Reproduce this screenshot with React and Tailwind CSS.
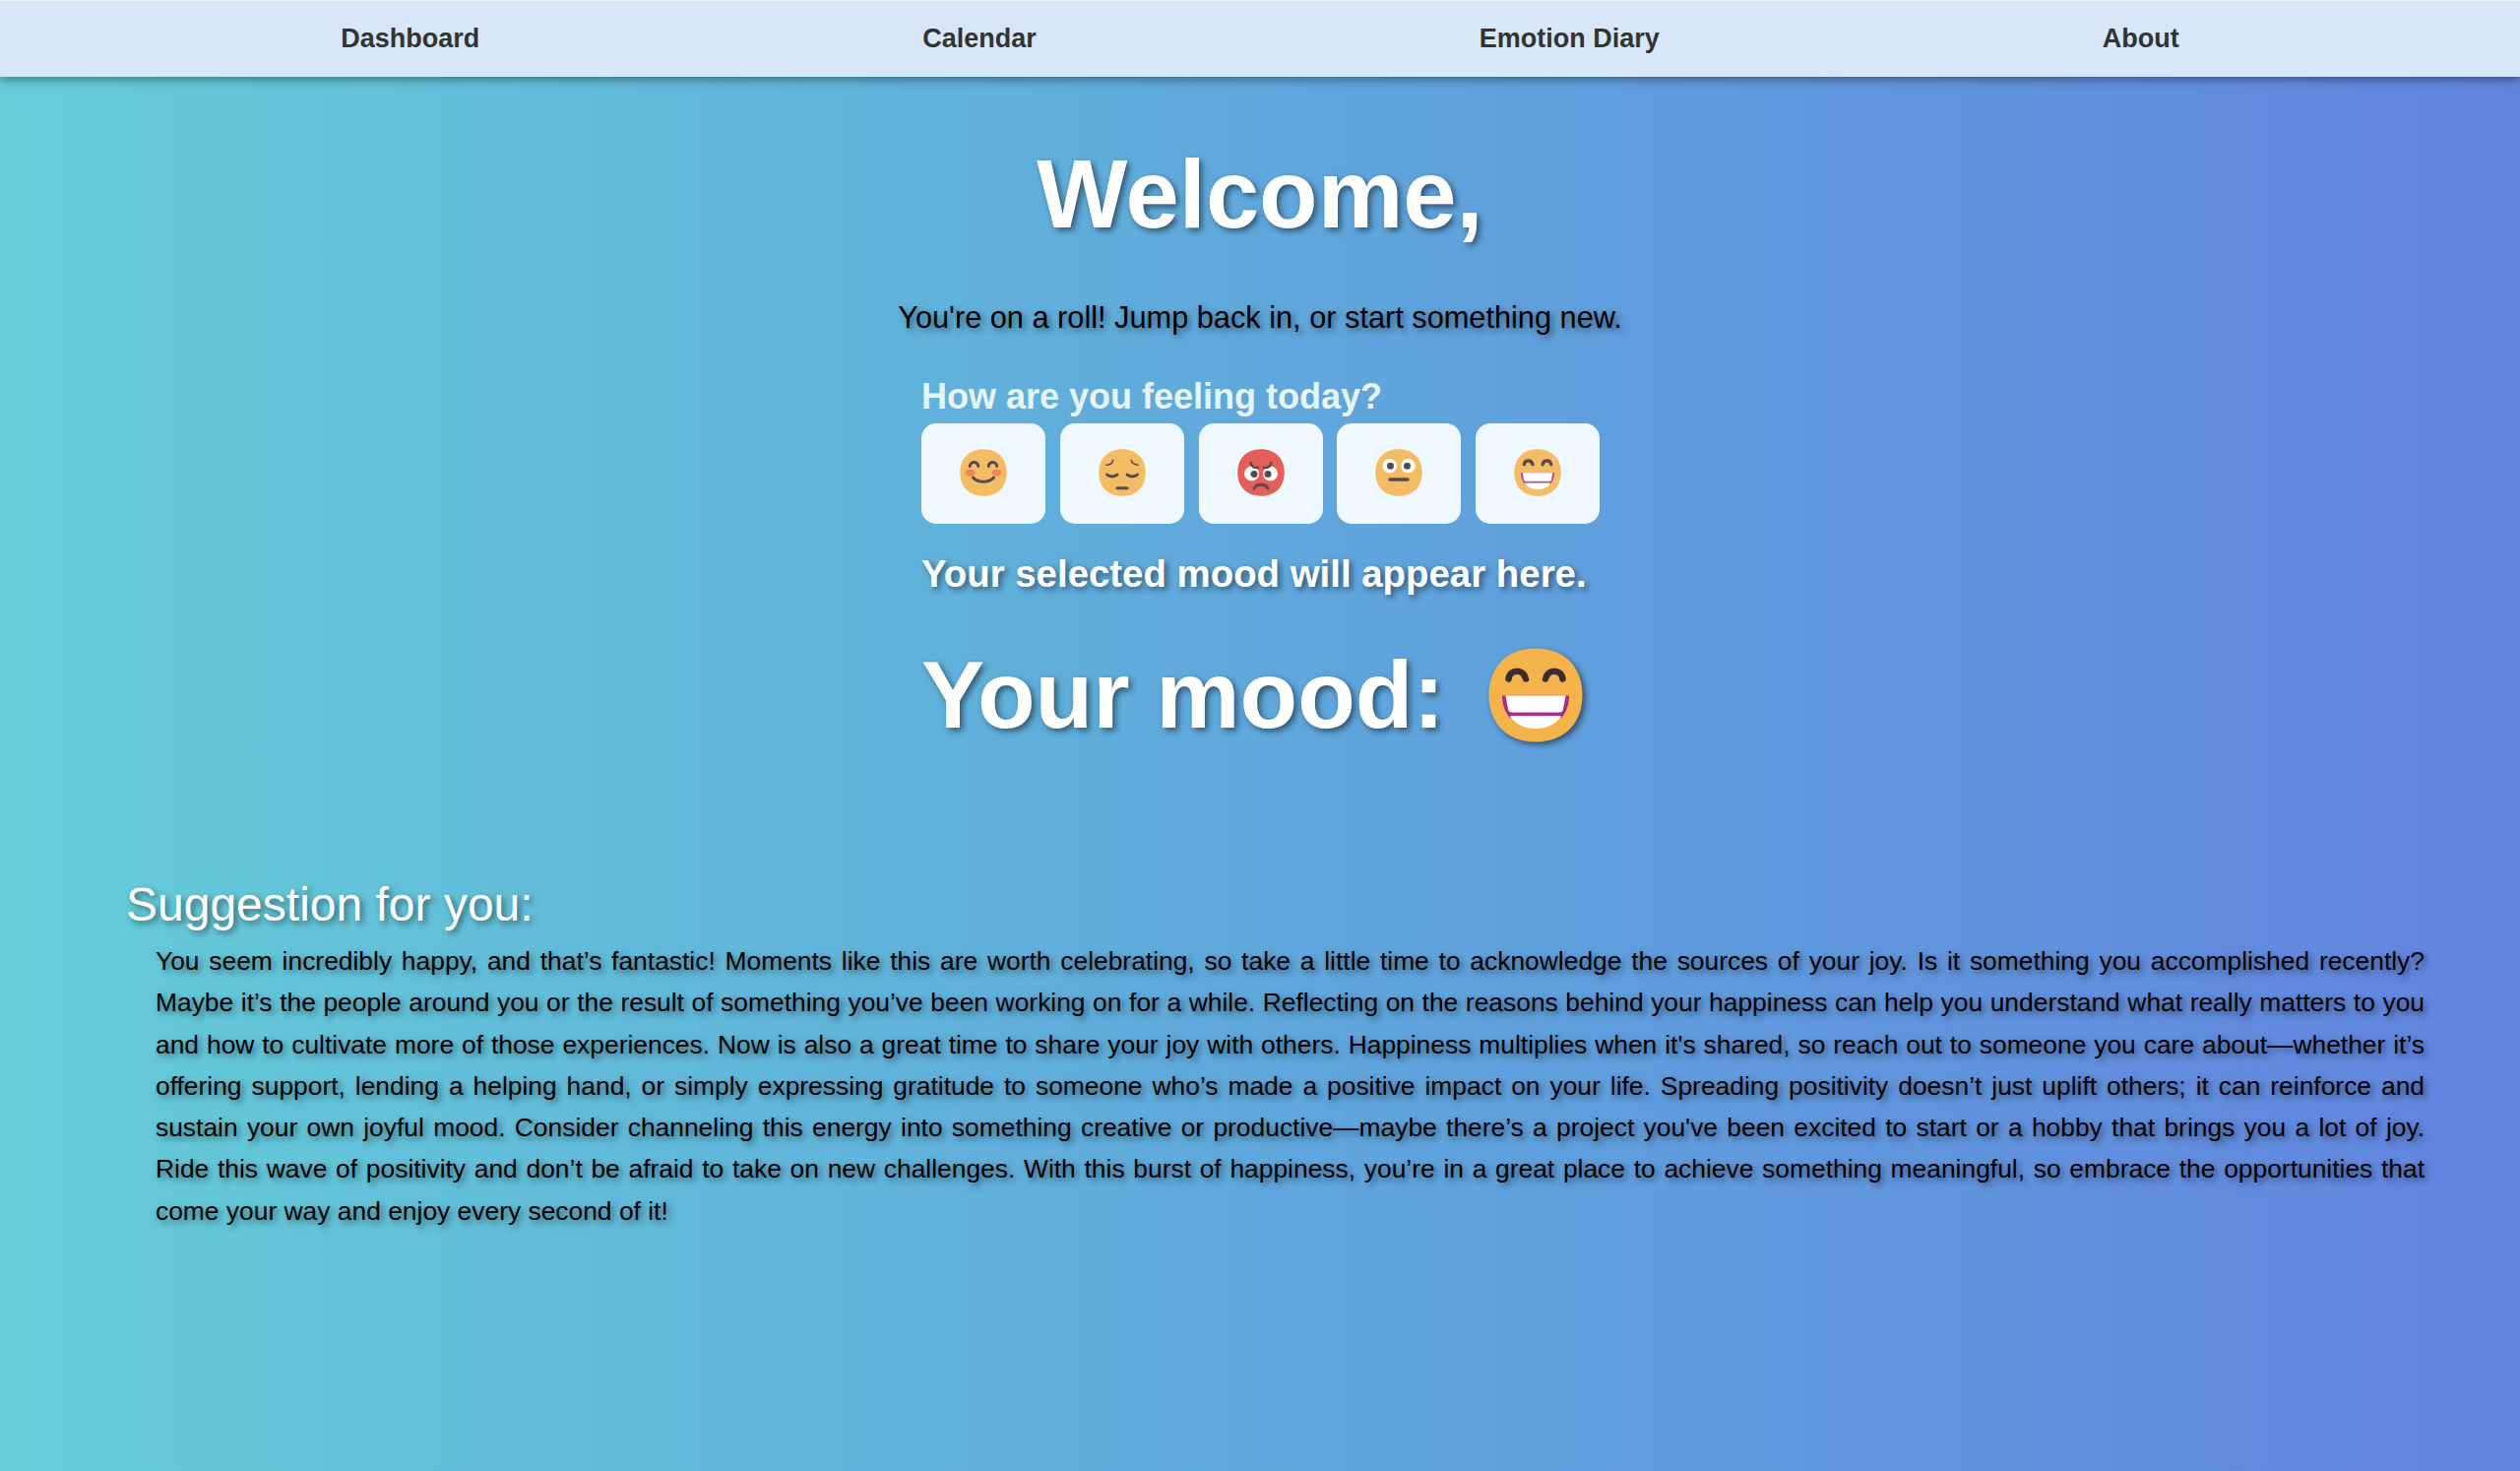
const dark = '#3d2b33';

function Face({ fill, className, children }) {
  return (
    <svg viewBox="0 0 96 96" className={className}>
      <path d="M48 .5C78 .5 95.500 20 95.500 48S78 95.500 48 95.500.5 76 .5 48 18 .5 48 .5Z" fill={fill} />
      {children}
    </svg>
  );
}

function Smile({ className }) {
  return (
    <Face fill="#f5b34b" className={className}>
      <ellipse cx="21" cy="48" rx="10" ry="7" fill="#f3703a" />
      <ellipse cx="75" cy="48" rx="10" ry="7" fill="#f3703a" />
      <g stroke={dark} strokeWidth="6" strokeLinecap="round" fill="none">
        <path d="M20.500 35C21 24.500 37 24.500 37.500 35" />
        <path d="M58.500 35C59 24.500 75 24.500 75.500 35" />
        <path d="M27 58C37 69.500 59 69.500 69 58" />
      </g>
    </Face>
  );
}

function Pensive({ className }) {
  return (
    <Face fill="#f5b34b" className={className}>
      <g stroke={dark} strokeWidth="6" strokeLinecap="round" fill="none">
        <path d="M17 52C22 57 33 57 38 52" />
        <path d="M58 52C63 57 74 57 79 52" />
        <path d="M38 79.500H58" />
      </g>
      <g stroke={dark} strokeWidth="3" strokeLinecap="round" fill="none">
        <path d="M15.500 32.500C22 32.500 28 29 29.500 22.500" />
        <path d="M80.500 32.500C74 32.500 67 29 66.500 22.500" />
      </g>
    </Face>
  );
}

function Angry({ className }) {
  return (
    <Face fill="#e3453b" className={className}>
      <circle cx="29" cy="50" r="15" fill="#fff" />
      <circle cx="67" cy="50" r="15" fill="#fff" />
      <circle cx="34" cy="51" r="7" fill={dark} />
      <circle cx="62" cy="51" r="7" fill={dark} />
      <g stroke={dark} strokeWidth="5" strokeLinecap="round" fill="none">
        <path d="M27 28C29 35 35 39 42 38" />
        <path d="M69 28C67 35 61 39 54 38" />
        <path d="M34 80C38 70 58 70 62 80" strokeWidth="6" />
      </g>
    </Face>
  );
}

function Neutral({ className }) {
  return (
    <Face fill="#f5b34b" className={className}>
      <circle cx="29.500" cy="34.500" r="14.500" fill="#fff" />
      <circle cx="67" cy="34.500" r="14.500" fill="#fff" />
      <circle cx="31" cy="34.500" r="7" fill={dark} />
      <circle cx="65" cy="34.500" r="7" fill={dark} />
      <path d="M30 62H66" stroke={dark} strokeWidth="7" strokeLinecap="round" />
    </Face>
  );
}

function Grin({ className }) {
  return (
    <Face fill="#f5b34b" className={className}>
      <g stroke={dark} strokeWidth="6.500" strokeLinecap="round" fill="none">
        <path d="M20.500 31.500C22 21 36 21 38 31.500" />
        <path d="M58 31.500C60 21 74 21 75.500 31.500" />
      </g>
      <path d="M14 48.500H82C82 60 78 66 74.500 71H21.500C18 66 14 60 14 48.500Z" fill="#ad2c83" />
      <path d="M17.500 48.500H78.500L76 62C75.500 64.500 74.500 65.500 72 65.500H24C21.500 65.500 20.500 64.500 20 62Z" fill="#fff" />
      <path d="M22 70C22.500 69.300 23 69 24 69H72C73 69 73.500 69.300 74 70C68 78 59 82 48 82S28 78 22 70Z" fill="#fff" />
    </Face>
  );
}

const moods = [Smile, Pensive, Angry, Neutral, Grin];

const suggestion =
  'You seem incredibly happy, and that’s fantastic! Moments like this are worth celebrating, so take a little time to acknowledge the sources of your joy. Is it something you accomplished recently? Maybe it’s the people around you or the result of something you’ve been working on for a while. Reflecting on the reasons behind your happiness can help you understand what really matters to you and how to cultivate more of those experiences. Now is also a great time to share your joy with others. Happiness multiplies when it\'s shared, so reach out to someone you care about—whether it’s offering support, lending a helping hand, or simply expressing gratitude to someone who’s made a positive impact on your life. Spreading positivity doesn’t just uplift others; it can reinforce and sustain your own joyful mood. Consider channeling this energy into something creative or productive—maybe there’s a project you\'ve been excited to start or a hobby that brings you a lot of joy. Ride this wave of positivity and don’t be afraid to take on new challenges. With this burst of happiness, you’re in a great place to achieve something meaningful, so embrace the opportunities that come your way and enjoy every second of it!';

export default function App() {
  return (
    <div className="flex h-[1494px] w-full flex-col bg-[linear-gradient(90deg,#65cdd8,#5fa8dc_50%,#6284df)] font-['Liberation_Sans',Arial,sans-serif]">
      <nav className="flex h-[78px] shrink-0 items-center justify-center gap-[450px] border-t border-[#eaf2f5] bg-[#d7e7f7] text-[27px] font-bold text-[#333] shadow-[0_3px_9px_rgba(0,0,0,0.4)]">
        <a>Dashboard</a>
        <a>Calendar</a>
        <a>Emotion Diary</a>
        <a>About</a>
      </nav>
      <header className="flex flex-col items-center text-shadow-[3px_3px_6px_rgba(0,0,0,0.5)]">
        <h1 className="mt-[65px] text-[97.500px] leading-[110px] font-bold text-white">Welcome,</h1>
        <p className="mt-[52px] text-[30.720px] leading-[36px] text-black">You're on a roll! Jump back in, or start something new.</p>
      </header>
      <main className="mx-auto mt-[38px] w-[690px] pl-px">
        <h2 className="text-[36px] leading-[48px] font-bold text-[#e8f4f4]">How are you feeling today?</h2>
        <div className="mt-[3px] flex justify-between">
          {moods.map((Mood, i) => (
            <button key={i} className="flex h-[102px] w-[126px] items-center justify-center rounded-[15px] bg-[#f0f8ff]">
              <Mood className="mt-[-2px] size-[48px] opacity-85" />
            </button>
          ))}
        </div>
        <p className="mt-[29px] text-[38.400px] leading-[44px] font-bold whitespace-nowrap text-white text-shadow-[3px_3px_6px_rgba(0,0,0,0.5)]">
          Your selected mood will appear here.
        </p>
        <div className="mt-[46px] flex h-[110px] items-center text-[96px] leading-[110px] font-bold whitespace-nowrap text-white text-shadow-[3px_3px_6px_rgba(0,0,0,0.5)]">
          <span>Your mood:</span>
          <Grin className="mt-[-1px] ml-[45px] size-[96px] shrink-0 drop-shadow-[3px_3px_3px_rgba(0,0,0,0.5)]" />
        </div>
      </main>
      <section className="mt-[130px] pr-[97px] pl-[128px] text-shadow-[3px_3px_6px_rgba(0,0,0,0.5)]">
        <h2 className="text-[48px] leading-[56px] text-white">Suggestion for you:</h2>
        <p className="mt-[8px] ml-[30px] text-justify text-[26.400px] leading-[42.300px] text-black">{suggestion}</p>
      </section>
    </div>
  );
}
